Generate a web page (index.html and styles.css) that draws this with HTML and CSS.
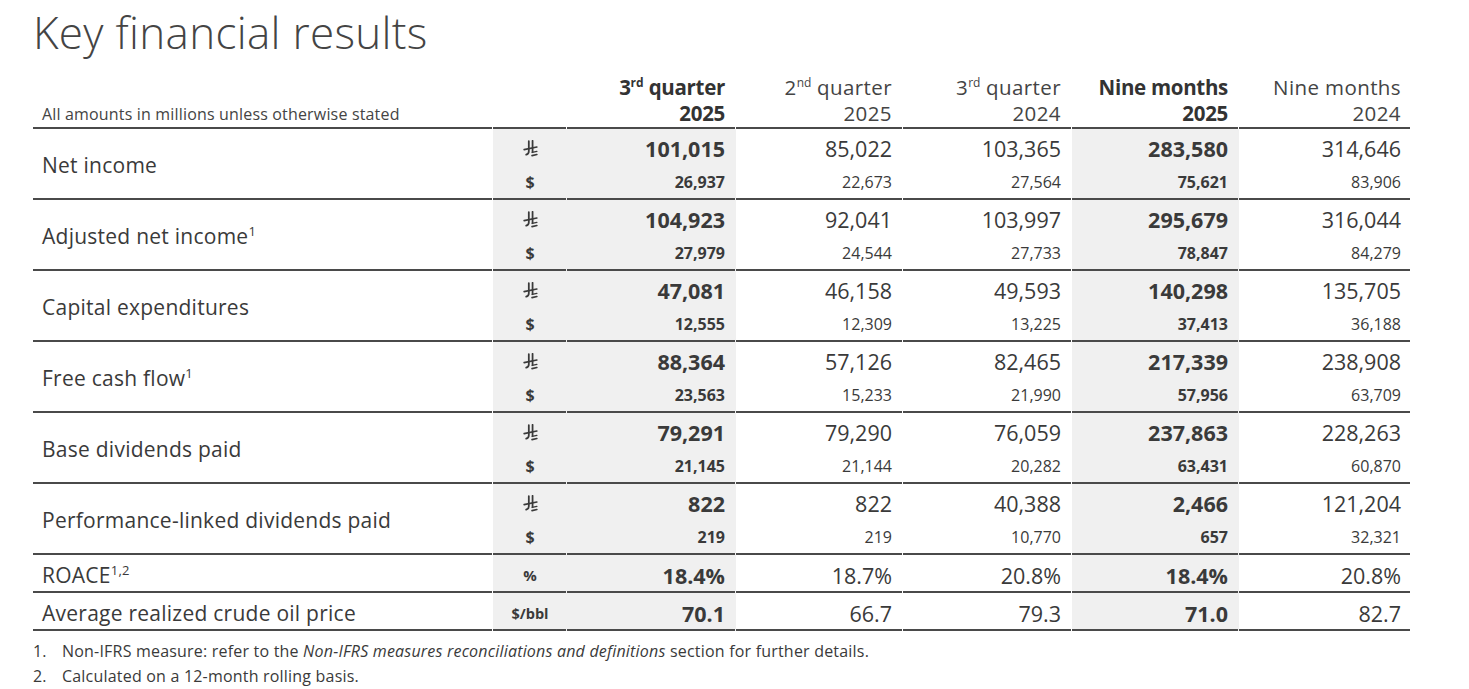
FILE: index.html
```html
<!DOCTYPE html>
<html lang="en">
<head>
<meta charset="utf-8">
<title>Key financial results</title>
<link rel="stylesheet" href="styles.css">
</head>
<body>
<h1 class="title">Key financial results</h1>
<svg width="0" height="0" class="defs" aria-hidden="true">
  <symbol id="sar" viewBox="0 0 16 18">
    <path d="M6.2 1.2 V11.8 Q6.2 14.6 3.4 15.6" fill="none" stroke="currentColor" stroke-width="1.9" stroke-linecap="round"/>
    <path d="M10.2 0.8 V12.6" fill="none" stroke="currentColor" stroke-width="1.9" stroke-linecap="round"/>
    <path d="M1.2 10.2 L14.8 7.4" fill="none" stroke="currentColor" stroke-width="1.7" stroke-linecap="round"/>
    <path d="M9.6 16.6 L14.8 15.4" fill="none" stroke="currentColor" stroke-width="1.7" stroke-linecap="round"/>
    <path d="M9.8 13.2 L14.8 12.1" fill="none" stroke="currentColor" stroke-width="1.5" stroke-linecap="round"/>
  </symbol>
</svg>
<table class="kfr">
  <colgroup>
    <col class="c-label"><col class="c-cur"><col class="c-v1"><col class="c-v2"><col class="c-v3"><col class="c-v4"><col class="c-v5">
  </colgroup>
  <thead>
    <tr>
      <th class="h-note">All amounts in millions unless otherwise stated</th>
      <th class="h-cur"></th>
      <th class="h-col strong">3<sup>rd</sup> quarter<br>2025</th>
      <th class="h-col">2<sup>nd</sup> quarter<br>2025</th>
      <th class="h-col">3<sup>rd</sup> quarter<br>2024</th>
      <th class="h-col strong">Nine months<br>2025</th>
      <th class="h-col last">Nine months<br>2024</th>
    </tr>
  </thead>
  <tbody>
    <tr class="big">
      <td class="label" rowspan="2">Net income</td>
      <td class="cur hl"><svg class="sar"><use href="#sar"/></svg></td>
      <td class="v hl strong">101,015</td><td class="v">85,022</td><td class="v">103,365</td><td class="v hl strong">283,580</td><td class="v last">314,646</td>
    </tr>
    <tr class="small">
      <td class="cur hl ln">$</td>
      <td class="v hl strong ln">26,937</td><td class="v ln">22,673</td><td class="v ln">27,564</td><td class="v hl strong ln">75,621</td><td class="v last ln">83,906</td>
    </tr>
    <tr class="big">
      <td class="label" rowspan="2">Adjusted net income<sup>1</sup></td>
      <td class="cur hl"><svg class="sar"><use href="#sar"/></svg></td>
      <td class="v hl strong">104,923</td><td class="v">92,041</td><td class="v">103,997</td><td class="v hl strong">295,679</td><td class="v last">316,044</td>
    </tr>
    <tr class="small">
      <td class="cur hl ln">$</td>
      <td class="v hl strong ln">27,979</td><td class="v ln">24,544</td><td class="v ln">27,733</td><td class="v hl strong ln">78,847</td><td class="v last ln">84,279</td>
    </tr>
    <tr class="big">
      <td class="label" rowspan="2">Capital expenditures</td>
      <td class="cur hl"><svg class="sar"><use href="#sar"/></svg></td>
      <td class="v hl strong">47,081</td><td class="v">46,158</td><td class="v">49,593</td><td class="v hl strong">140,298</td><td class="v last">135,705</td>
    </tr>
    <tr class="small">
      <td class="cur hl ln">$</td>
      <td class="v hl strong ln">12,555</td><td class="v ln">12,309</td><td class="v ln">13,225</td><td class="v hl strong ln">37,413</td><td class="v last ln">36,188</td>
    </tr>
    <tr class="big">
      <td class="label" rowspan="2">Free cash flow<sup>1</sup></td>
      <td class="cur hl"><svg class="sar"><use href="#sar"/></svg></td>
      <td class="v hl strong">88,364</td><td class="v">57,126</td><td class="v">82,465</td><td class="v hl strong">217,339</td><td class="v last">238,908</td>
    </tr>
    <tr class="small">
      <td class="cur hl ln">$</td>
      <td class="v hl strong ln">23,563</td><td class="v ln">15,233</td><td class="v ln">21,990</td><td class="v hl strong ln">57,956</td><td class="v last ln">63,709</td>
    </tr>
    <tr class="big">
      <td class="label" rowspan="2">Base dividends paid</td>
      <td class="cur hl"><svg class="sar"><use href="#sar"/></svg></td>
      <td class="v hl strong">79,291</td><td class="v">79,290</td><td class="v">76,059</td><td class="v hl strong">237,863</td><td class="v last">228,263</td>
    </tr>
    <tr class="small">
      <td class="cur hl ln">$</td>
      <td class="v hl strong ln">21,145</td><td class="v ln">21,144</td><td class="v ln">20,282</td><td class="v hl strong ln">63,431</td><td class="v last ln">60,870</td>
    </tr>
    <tr class="big">
      <td class="label" rowspan="2">Performance-linked dividends paid</td>
      <td class="cur hl"><svg class="sar"><use href="#sar"/></svg></td>
      <td class="v hl strong">822</td><td class="v">822</td><td class="v">40,388</td><td class="v hl strong">2,466</td><td class="v last">121,204</td>
    </tr>
    <tr class="small">
      <td class="cur hl ln">$</td>
      <td class="v hl strong ln">219</td><td class="v ln">219</td><td class="v ln">10,770</td><td class="v hl strong ln">657</td><td class="v last ln">32,321</td>
    </tr>
    <tr class="single">
      <td class="label ln">ROACE<sup>1,2</sup></td>
      <td class="cur hl ln">%</td>
      <td class="v hl strong ln">18.4%</td><td class="v ln">18.7%</td><td class="v ln">20.8%</td><td class="v hl strong ln">18.4%</td><td class="v last ln">20.8%</td>
    </tr>
    <tr class="single">
      <td class="label ln">Average realized crude oil price</td>
      <td class="cur hl ln bbl">$/bbl</td>
      <td class="v hl strong ln">70.1</td><td class="v ln">66.7</td><td class="v ln">79.3</td><td class="v hl strong ln">71.0</td><td class="v last ln">82.7</td>
    </tr>
  </tbody>
</table>
<div class="notes">
  <p class="note"><span class="num">1.</span><span>Non-IFRS measure: refer to the <em>Non-IFRS measures reconciliations and definitions</em> section for further details.</span></p>
  <p class="note"><span class="num">2.</span><span>Calculated on a 12-month rolling basis.</span></p>
</div>
</body>
</html>
```

FILE: styles.css
```css
html, body {
  margin: 0;
  padding: 0;
  background: #ffffff;
}

body {
  padding: 0 0 0 33px;
  font-family: "Open Sans", "Noto Sans", "DejaVu Sans", sans-serif;
  color: #3a3a3a;
}

.defs {
  position: absolute;
  width: 0;
  height: 0;
  overflow: hidden;
}

.title {
  margin: 0;
  padding-top: 5px;
  height: 69px;
  font-size: 44px;
  font-weight: 300;
  letter-spacing: 0.3px;
  line-height: 54px;
  color: #444444;
}

.kfr {
  width: 1378px;
  table-layout: fixed;
  border-collapse: separate;
  border-spacing: 0;
}

.c-label { width: 460px; }
.c-cur { width: 74px; }
.c-v1 { width: 169px; }
.c-v2 { width: 167px; }
.c-v3 { width: 169px; }
.c-v4 { width: 167px; }
.c-v5 { width: 172px; }

.kfr th,
.kfr td {
  padding: 0;
}

.kfr th {
  font-weight: 400;
  vertical-align: bottom;
  padding-bottom: 3px;
  background-image: linear-gradient(#4a4a4a, #4a4a4a);
  background-size: calc(100% - 1px) 2px;
  background-position: left bottom;
  background-repeat: no-repeat;
}

.kfr .h-note {
  text-align: left;
  padding-left: 9px;
  padding-bottom: 5px;
  font-size: 16px;
  line-height: 20px;
  letter-spacing: 0.17px;
  color: #444444;
}

.kfr .h-col {
  text-align: right;
  padding-right: 11px;
  font-size: 20.5px;
  line-height: 26px;
  letter-spacing: 0.4px;
  color: #444444;
}

.kfr .h-col.strong {
  font-weight: 700;
  color: #333333;
  font-stretch: 88%;
  letter-spacing: -0.3px;
}

.kfr .h-col.last { padding-right: 10px; }

.h-col sup {
  font-size: 12px;
  line-height: 0;
  vertical-align: 8px;
  letter-spacing: 0;
}

.kfr td.ln,
.kfr td.label {
  background-image: linear-gradient(#4a4a4a, #4a4a4a);
  background-size: calc(100% - 1px) 2px;
  background-position: left bottom;
  background-repeat: no-repeat;
}

.kfr td.label {
  padding-left: 9px;
  font-size: 21px;
  letter-spacing: 0.25px;
  color: #3a3a3a;
  vertical-align: middle;
}

.label sup {
  font-size: 13px;
  line-height: 0;
  vertical-align: 8px;
}

.kfr .hl {
  background-color: #f0f0f0;
}

.kfr .cur {
  text-align: center;
  font-size: 15.5px;
  font-weight: 700;
  color: #3a3a3a;
  font-stretch: 88%;
}

.sar {
  width: 15px;
  height: 17px;
  vertical-align: -3px;
  color: #3a3a3a;
}

.kfr .v {
  text-align: right;
  padding-right: 11px;
  font-stretch: 88%;
  color: #3a3a3a;
}

.kfr .v.last { padding-right: 10px; }

.kfr .strong { font-weight: 700; }

.kfr tr.big td { height: 34px; padding-top: 2px; }
.kfr tr.big .v { font-size: 21.5px; }

.kfr tr.small td { height: 33px; padding-top: 0; padding-bottom: 2px; }
.kfr tr.small .v { font-size: 16px; }
.kfr tr.small .cur { font-size: 16px; }

.kfr tr.single td { height: 36px; padding-top: 2px; }
.kfr tr.single .v { font-size: 21.5px; }
.kfr tr.single .cur { font-size: 15px; }
.kfr tr.single .cur.bbl { font-size: 14.5px; font-stretch: 88%; }

.kfr td.label[rowspan] { padding-top: 0; }

.notes {
  margin-top: 8px;
  font-size: 16px;
  line-height: 25px;
  color: #3a3a3a;
  letter-spacing: 0.2px;
}

.note {
  display: flex;
  margin: 0;
}

.num {
  width: 29px;
  flex: none;
}
```
